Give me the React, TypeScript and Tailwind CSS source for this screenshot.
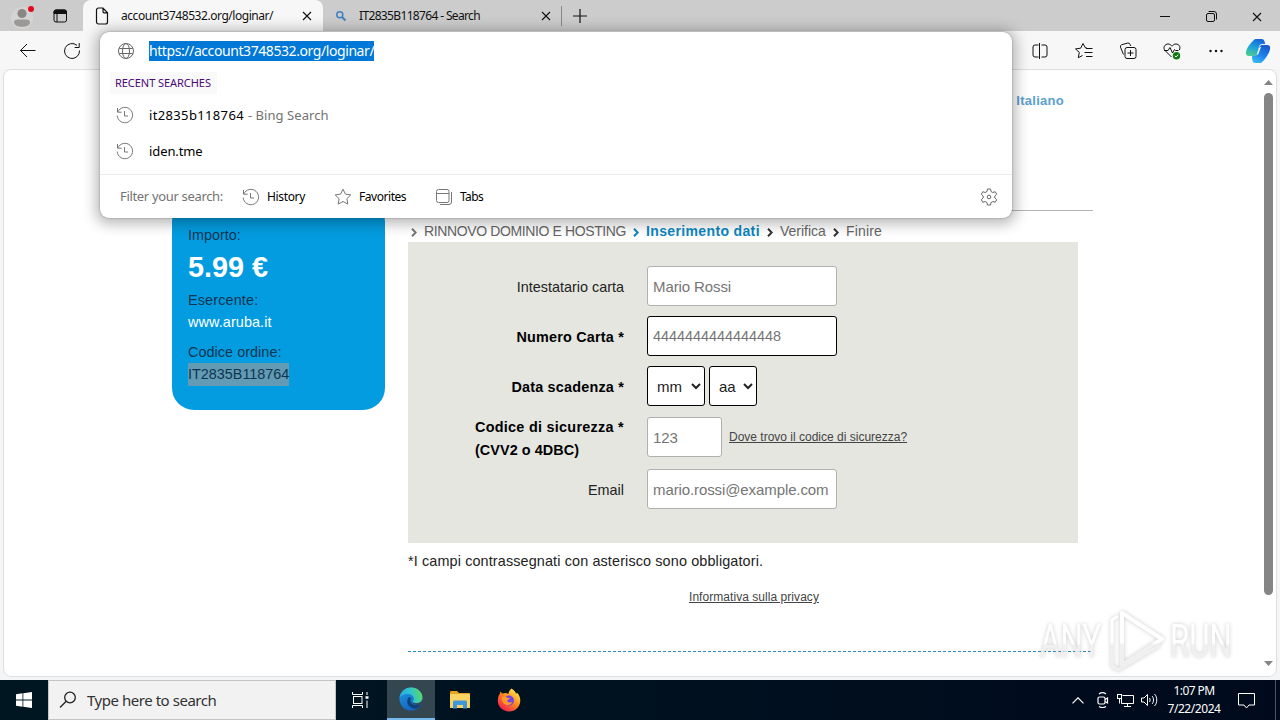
import type { ReactNode } from "react";

type IconProps = { className?: string; children: ReactNode; size?: number };

function Icon({ className = "", children, size = 20 }: IconProps) {
  return (
    <svg
      width={size}
      height={size}
      viewBox="0 0 20 20"
      fill="none"
      stroke="currentColor"
      strokeWidth="1"
      className={`shrink-0 ${className}`}
    >
      {children}
    </svg>
  );
}

function HistoryIcon() {
  return (
    <Icon className="text-[#767676]">
      <path d="M2.5 3v4.2h4.2M2.8 7A7.7 7.7 0 1 1 2.2 10.6" />
      <path d="M9.5 6v5h3.5" />
    </Icon>
  );
}

function StarIcon() {
  return (
    <Icon className="text-[#767676]">
      <path
        strokeLinejoin="round"
        d="M10 2.2l2.4 4.9 5.4.8-3.9 3.8.9 5.4-4.8-2.6-4.8 2.6.9-5.4-3.9-3.8 5.4-.8z"
      />
    </Icon>
  );
}

function CloseIcon({ className = "" }: { className?: string }) {
  return (
    <svg width="10" height="10" viewBox="0 0 10 10" stroke="#111" strokeWidth="1.1" className={`shrink-0 ${className}`}>
      <path d="M1 1l8 8M9 1l-8 8" />
    </svg>
  );
}

function TabBar() {
  return (
    <div className="flex h-[31px] shrink-0 items-center bg-[#cccccc] text-[12px] text-[#111]">
      <svg width="30" height="30" viewBox="0 0 30 30" className="ml-2 shrink-0">
        <circle cx="14" cy="17" r="11" fill="#d6d4d3" />
        <circle cx="14" cy="12.5" r="4.6" fill="#8a8886" />
        <path d="M6 21.5c0-2.400 2-3 4-3h8c2 0 4 .6 4 3 0 2.800-4 4.300-8 4.300s-8-1.500-8-4.300z" fill="#9b9997" />
        <circle cx="23" cy="8" r="3" fill="#e00b1c" />
      </svg>
      <svg width="16" height="16" viewBox="0 0 16 16" className="ml-[14px] shrink-0" fill="none" stroke="#111">
        <rect x="2" y="2" width="12.500" height="12" rx="2" />
        <path d="M2 4a2 2 0 0 1 2-2h8.500a2 2 0 0 1 2 2v1.500H2z" fill="#111" />
        <path d="M5 5v9" />
      </svg>
      <div className="ml-[15px] flex h-full w-[240px] items-center rounded-t-lg bg-[#f7f7f7]">
        <svg width="14" height="18" viewBox="0 0 14 18" fill="none" stroke="#111" strokeWidth="1.200" className="ml-3">
          <path d="M1.500 3a2 2 0 0 1 2-2H8l4.500 4.800V15a2 2 0 0 1-2 2h-7a2 2 0 0 1-2-2zM8 1v3.800a1 1 0 0 0 1 1h3.500" />
        </svg>
        <span className="ml-3 w-[181px] tracking-[-0.45px]">account3748532.org/loginar/</span>
        <CloseIcon />
      </div>
      <svg width="12" height="12" viewBox="0 0 12 12" fill="none" stroke="#3b82c4" className="ml-[12px] shrink-0">
        <circle cx="4.800" cy="4.800" r="3" strokeWidth="1.500" />
        <path d="M7 7l3.500 3.500" strokeWidth="2" />
      </svg>
      <span className="ml-[12px] w-[182px] tracking-[-0.65px]">IT2835B118764 - Search</span>
      <CloseIcon />
      <div className="ml-[10px] h-5 w-px bg-[#888]" />
      <svg width="14" height="14" viewBox="0 0 14 14" stroke="#111" strokeWidth="1.200" className="ml-[11px]">
        <path d="M7 0v14M0 7h14" />
      </svg>
      <div className="ml-auto flex w-[102px] items-center justify-between pt-0.5">
        <svg width="10" height="10" stroke="#111">
          <path d="M0 4.500h10" />
        </svg>
        <svg width="11" height="11" viewBox="0 0 11 11" stroke="#111" fill="none">
          <rect x="0.500" y="2.500" width="8" height="8" rx="1.500" />
          <path d="M2.500 .5h5.500a2.500 2.500 0 0 1 2.500 2.500v5.500" />
        </svg>
        <CloseIcon />
      </div>
      <div className="w-[18px] shrink-0" />
    </div>
  );
}

function Toolbar() {
  return (
    <div className="flex h-[38px] shrink-0 items-center bg-[#f7f7f7] pt-px text-[#111]">
      <Icon className="ml-[18px]">
        <path d="M17.500 9.500H2.500M9 3L2.500 9.500 9 16" />
      </Icon>
      <Icon className="ml-[24px]">
        <path d="M17.500 9.500A7.500 7.500 0 1 1 15 4.400M17.200 2v4.500h-4.500" />
      </Icon>
      <div className="ml-auto flex items-center gap-6">
        <Icon>
          <path d="M8.500 4H5a2 2 0 0 0-2 2v8a2 2 0 0 0 2 2h3.500M11.500 4H15a2 2 0 0 1 2 2v8a2 2 0 0 1-2 2h-3.500M9.500 2v16" />
        </Icon>
        <Icon>
          <path
            strokeLinejoin="round"
            d="M13 7h-1.500L9 2.500 6.700 7.200l-5.200.7 3.800 3.500-1 5.300L8.500 14.500M12 7.500h6.500M10.500 11.500h8M12 15.500h6.500"
          />
        </Icon>
        <Icon>
          <path d="M5.500 13.500L2.500 6.200a2 2 0 0 1 1.200-2.500l6-1.600a2 2 0 0 1 2.400 1.400l.5 1.500" />
          <rect x="7" y="6.500" width="11" height="11" rx="2" />
          <path d="M12.500 9v6M9.500 12h6" />
        </Icon>
        <Icon>
          <path d="M9.500 16L3 9.500C.5 6.500 3 3 6 3c1.800 0 3 1 4 2.200C11 4 12.200 3 14 3c3 0 5 3 3.300 6M2 9.500h4l2-3 2.500 5.500 2-3.500 1 1h3" />
          <circle cx="14.500" cy="14.800" r="3.700" fill="#0f7b0f" stroke="none" />
          <path d="M12.800 14.800l1.200 1.200 2.200-2.300" stroke="#fff" />
        </Icon>
        <Icon>
          <g fill="currentColor" stroke="none">
            <circle cx="4.500" cy="10" r="1.200" />
            <circle cx="10" cy="10" r="1.200" />
            <circle cx="15.500" cy="10" r="1.200" />
          </g>
        </Icon>
      </div>
      <CopilotLogo />
    </div>
  );
}

function CopilotLogo() {
  return (
    <svg width="26" height="26" viewBox="0 0 26 26" className="mr-[9px] ml-[19px] shrink-0">
      <defs>
        <linearGradient id="cpA" x1="0.600" y1="0" x2="0.200" y2="1">
          <stop offset="0" stopColor="#1668d8" />
          <stop offset="0.500" stopColor="#1fa3dd" />
          <stop offset="1" stopColor="#4fd08b" />
        </linearGradient>
        <linearGradient id="cpB" x1="0.800" y1="0" x2="0.300" y2="1">
          <stop offset="0" stopColor="#1a55c8" />
          <stop offset="0.600" stopColor="#1f86ee" />
          <stop offset="1" stopColor="#36b8f2" />
        </linearGradient>
      </defs>
      <path d="M8 3c.8-1.500 2-2 3.500-2h5c2 0 2.700 1.200 3.200 3l.6 2h-3c-2 0-2.800 1-3.300 2.700L12 16c-.5 1.500-1.500 2-3 2H4c-2.500 0-3.700-1.500-3-4.200C2 9.500 5.500 5 8 3z" fill="url(#cpA)" />
      <path d="M18 23c-.8 1.500-2 2-3.500 2h-4c-2 0-2.700-1.200-3.200-3L7 18h2c2 0 2.800-1 3.300-2.700L14.500 9c.5-1.500 1.500-2 3-2H22c2.500 0 3.700 1.500 3 4.200-1 4.300-4.500 9.800-7 11.800z" fill="url(#cpB)" />
      <path d="M14.300 9.500l1.800-.7-2.800 7.500-1.700.7z" fill="#f3fbff" />
    </svg>
  );
}

function Suggestions() {
  return (
    <div className="absolute top-8 left-[100px] flex h-[186px] w-[912px] flex-col rounded-[9px] bg-white text-[13px] shadow-[0_2px_14px_4px_rgba(0,0,0,0.28),0_0_2px_rgba(0,0,0,0.35)]">
      <div className="flex h-[38px] items-center pl-4">
        <Icon className="text-[#666]">
          <circle cx="10" cy="10" r="7.500" />
          <ellipse cx="10" cy="10" rx="3.500" ry="7.500" />
          <path d="M3.300 7.500h13.400M3.300 12.500h13.400" />
        </Icon>
        <span className="ml-[13px] h-5 bg-[#0078d7] text-[14px] leading-5 tracking-[-0.42px] text-white">
          https://account3748532.org/loginar/
        </span>
      </div>
      <div className="mt-[2px] ml-[10px] h-[22px] w-[107px] bg-[#faf9fa] pl-[5px] text-[11px] leading-[22px] tracking-[-0.05px] text-[#4b0a78]">
        RECENT SEARCHES
      </div>
      <div className="mt-[3px] flex h-9 items-center pl-[15px] text-black">
        <HistoryIcon />
        <span className="ml-[14px] pt-px tracking-[0.35px]">it2835b118764</span>
        <span className="ml-1 pt-px tracking-[0.05px] text-[#737373]">- Bing Search</span>
      </div>
      <div className="flex h-9 items-center pl-[15px] text-black">
        <HistoryIcon />
        <span className="ml-[14px] pt-px tracking-[-0.1px]">iden.tme</span>
      </div>
      <div className="mt-[5px] flex flex-1 items-center border-t border-[#ebebeb] pl-5 text-[12px] text-black">
        <span className="w-[121px] text-[13px] tracking-[-0.33px] text-[#737373]">Filter your search:</span>
        <HistoryIcon />
        <span className="ml-[6px] w-[66px] tracking-[-0.35px]">History</span>
        <StarIcon />
        <span className="ml-[6px] w-[75px] tracking-[-0.45px]">Favorites</span>
        <Icon className="text-[#767676]">
          <rect x="2.500" y="2.500" width="12.500" height="13" rx="2" />
          <path d="M2.500 6.500H15M17.500 5v10a2.500 2.500 0 0 1-2.500 2.500H6" />
        </Icon>
        <span className="ml-[6px] tracking-[-0.6px]">Tabs</span>
        <Icon className="mr-[13px] ml-auto text-[#666]">
          <path
            strokeLinejoin="round"
            d="M8.500 2h3l.5 2.500 1.800 1 2.400-.8 1.500 2.600-1.900 1.700v2l1.900 1.700-1.500 2.600-2.400-.8-1.800 1-.5 2.500h-3L8 15.500l-1.800-1-2.400.8-1.500-2.600L4.200 11V9L2.300 7.300l1.500-2.600 2.400.8 1.800-1z"
          />
          <circle cx="10" cy="10" r="1.800" />
        </Icon>
      </div>
    </div>
  );
}

function OrderCard() {
  return (
    <div className="mt-[130px] h-[210px] w-[213px] rounded-[22px] bg-[#049ce0] px-4 pt-[24px] text-[14.4px] leading-[22px] text-[#0d3550]">
      <div>Importo:</div>
      <div className="h-[43px] text-[28.800px] leading-[43px] font-bold text-white">5.99 €</div>
      <div className="tracking-[0.15px]">Esercente:</div>
      <div className="tracking-[0.1px] text-white">www.aruba.it</div>
      <div className="mt-2 tracking-[0.05px]">Codice ordine:</div>
      <span className="inline-block h-[23px] bg-[#639bb5] leading-[23px]">IT2835B118764</span>
    </div>
  );
}

function Chevron({ className }: { className: string }) {
  return (
    <svg width="6" height="9" viewBox="0 0 6 9" fill="none" stroke="currentColor" strokeWidth="2" className={className}>
      <path d="M1 .8l3.700 3.700L1 8.200" />
    </svg>
  );
}

function Breadcrumb() {
  return (
    <div className="flex h-[22px] items-center pl-[3px] text-[14px] text-[#666]">
      <Chevron className="mt-[3px] text-[#777]" />
      <span className="ml-[7px] w-[209px] tracking-[-0.38px]">RINNOVO DOMINIO E HOSTING</span>
      <Chevron className="mt-[3px] text-[#0b86c2]" />
      <span className="ml-[7px] w-[121px] pt-px font-bold tracking-[0.36px] text-[#0b86c2]">Inserimento dati</span>
      <Chevron className="mt-[3px] text-[#333]" />
      <span className="ml-[7px] w-[53px]">Verifica</span>
      <Chevron className="mt-[3px] text-[#333]" />
      <span className="ml-[7px] tracking-[0.15px]">Finire</span>
    </div>
  );
}

const field =
  "h-10 rounded-[3px] border border-[#b0b0b0] bg-white px-[5px] text-[15px] tracking-[-0.1px] placeholder:text-[#757575]";

function FormRow({ label, bold, children }: { label: ReactNode; bold?: boolean; children: ReactNode }) {
  return (
    <div className="flex items-center">
      <div
        className={`flex w-[216px] justify-end pt-[2px] leading-[23px] ${bold ? "font-bold tracking-[0.2px] text-black" : "text-[#222]"}`}
      >
        <div>{label}</div>
      </div>
      <div className="ml-[23px] flex items-center">{children}</div>
    </div>
  );
}

function PaymentForm() {
  return (
    <div className="flex h-[301px] w-[670px] flex-col bg-[#e5e6e0] pt-6 text-[14.4px]">
      <FormRow label="Intestatario carta">
        <input className={`${field} w-[190px]`} placeholder="Mario Rossi" />
      </FormRow>
      <div className="mt-[10px]">
        <FormRow bold label="Numero Carta *">
          <input
            className="h-10 w-[190px] rounded-[3px] border border-black bg-white px-[5px] text-[14.400px] placeholder:text-[#757575]"
            placeholder="4444444444444448"
          />
        </FormRow>
      </div>
      <div className="mt-[10px]">
        <FormRow bold label="Data scadenza *">
          <select className="h-10 w-[58px] rounded-[3px] border border-black bg-white pl-[5px] text-[15px] text-[#222]">
            <option>mm</option>
          </select>
          <select className="ml-1 h-10 w-12 rounded-[3px] border border-black bg-white pl-[5px] text-[15px] text-[#222]">
            <option>aa</option>
          </select>
        </FormRow>
      </div>
      <div className="mt-[6px]">
        <FormRow
          bold
          label={
            <div className="pt-[2px]">
              <div className="tracking-[0.28px]">Codice di sicurezza *</div>
              <div className="tracking-[0.08px]">(CVV2 o 4DBC)</div>
            </div>
          }
        >
          <input className={`${field} w-[75px]`} placeholder="123" />
          <a className="ml-[7px] text-[12px] text-[#444] underline">Dove trovo il codice di sicurezza?</a>
        </FormRow>
      </div>
      <div className="mt-[7px]">
        <FormRow label="Email">
          <input className={`${field} w-[190px]`} placeholder="mario.rossi@example.com" />
        </FormRow>
      </div>
    </div>
  );
}

const watermarkText = "inline-block origin-left bg-linear-to-b from-white from-55% to-[#ececec] to-60% bg-clip-text text-transparent";

function Watermark() {
  return (
    <div className="absolute top-[604px] left-[1040px] flex h-[74px] items-center font-['Roboto'] text-[46px] leading-none opacity-75 drop-shadow-[0_0_2px_rgba(0,0,0,0.28)]">
      <span className="w-[65px]">
        <span className={`${watermarkText} scale-x-[0.680]`}>ANY</span>
      </span>
      <svg width="62" height="66" viewBox="0 0 62 66" fill="none" strokeLinejoin="round">
        <defs>
          <linearGradient id="wm" gradientUnits="userSpaceOnUse" x1="0" y1="0" x2="0" y2="66">
            <stop offset="0.520" stopColor="#fff" />
            <stop offset="0.560" stopColor="#ececec" />
          </linearGradient>
        </defs>
        <g stroke="url(#wm)">
          <path d="M17 5v52l40-26z" strokeWidth="4" />
          <path d="M7 58V12l6-4" strokeWidth="3" />
          <path d="M7 58l6 4 42-25" strokeWidth="3" />
        </g>
      </svg>
      <span className="ml-[3px] w-[64px]">
        <span className={`${watermarkText} scale-x-[0.680]`}>RUN</span>
      </span>
    </div>
  );
}

function Page() {
  return (
    <div className="flex min-h-0 flex-1 bg-[#f4f5f6] px-[3px] pb-[3px]">
      <div className="flex flex-1 overflow-hidden rounded-lg border border-[#dedede] bg-white font-['Liberation_Sans',Arial,sans-serif]">
        <div className="flex flex-1 pl-[168px]">
          <OrderCard />
          <div className="ml-[23px] w-[685px]">
            <div className="h-[141px] border-b border-[#b5b5b5] pt-[21px] pr-[29px] text-right text-[13px] font-bold tracking-[0.28px] text-[#5a9fd0]">
              Italiano
            </div>
            <div className="h-[9px]" />
            <Breadcrumb />
            <PaymentForm />
            <p className="mt-2 text-[14.4px] leading-5 tracking-[0.13px] text-[#222]">
              *I campi contrassegnati con asterisco sono obbligatori.
            </p>
            <p className="mt-[17px] pl-[281px] text-[12px] leading-[18px] tracking-[0.05px] text-[#444]">
              <a className="underline">Informativa sulla privacy</a>
            </p>
            <div className="mt-[45px] h-px bg-[repeating-linear-gradient(90deg,#2b8cbc_0_3px,transparent_3px_5px)]" />
          </div>
        </div>
        <div className="flex w-[15px] flex-col items-center pt-[10px] text-[#858585]">
          <svg width="9" height="5" className="shrink-0" fill="currentColor">
            <path d="M0 5L4.500 0 9 5z" />
          </svg>
          <div className="mt-2 h-[502px] w-[9px] shrink-0 rounded-full bg-[#858585]" />
          <svg width="9" height="5" className="mt-[66px] shrink-0" fill="currentColor">
            <path d="M0 0l4.500 5L9 0z" />
          </svg>
        </div>
      </div>
    </div>
  );
}

function EdgeLogo() {
  return (
    <svg width="24" height="24" viewBox="0 0 24 24">
      <defs>
        <linearGradient id="edA" x1="0" y1="0.500" x2="1" y2="0.300">
          <stop offset="0" stopColor="#2aa9e0" />
          <stop offset="0.500" stopColor="#2fc3cf" />
          <stop offset="1" stopColor="#5fd95c" />
        </linearGradient>
        <linearGradient id="edB" x1="0" y1="0" x2="0.500" y2="1">
          <stop offset="0" stopColor="#1b9de2" />
          <stop offset="1" stopColor="#1464c0" />
        </linearGradient>
      </defs>
      <circle cx="12" cy="12" r="11.500" fill="url(#edB)" />
      <path d="M.6 11C1.200 5 6 .5 12 .5c7 0 11.500 5 11.500 10 0 3.500-2.600 5.700-5.700 5.700-2.400 0-4-.9-4-1.800 0-.6 1-1 1-2.900C14.800 9 12 7 8.500 7 4.500 7 1.500 9 .6 11z" fill="url(#edA)" />
      <path d="M9 11c-2.500 6 1.500 10.500 8 10.800 2-.9 4-2.700 5-4.800-4 2-9 1.500-10.500-2.500-.5-1.500 0-2.500.5-3.500-1-.6-2-.6-3 0z" fill="#123f78" />
      <path d="M24 15.500l-1.800 1.500c-3 1.500-6 1.300-8-.5l-.4-2.100c0 .9 1.600 1.800 4 1.800 3.100 0 5.200-1.600 5.700-4.200z" fill="#344750" />
    </svg>
  );
}

function FolderLogo() {
  return (
    <svg width="22" height="20" viewBox="0 0 22 20">
      <path d="M1 2.500C1 1.500 1.500 1 2.500 1H8l2 2h10c.8 0 1 .5 1 1v3H1z" fill="#e5a320" />
      <rect x="1" y="4" width="20" height="14" rx="0.500" fill="#fbd264" />
      <path d="M4 18.500V12a1.500 1.500 0 0 1 1.500-1.500h11A1.500 1.500 0 0 1 18 12v6.500h-4V15H8v3.500z" fill="#3f97d6" />
    </svg>
  );
}

function FirefoxLogo() {
  return (
    <svg width="24" height="24" viewBox="0 0 24 24">
      <defs>
        <linearGradient id="ffA" x1="0.800" y1="0.100" x2="0.200" y2="0.900">
          <stop offset="0" stopColor="#ffe24a" />
          <stop offset="0.450" stopColor="#ff8a1f" />
          <stop offset="1" stopColor="#f5234f" />
        </linearGradient>
      </defs>
      <path d="M14.500.5c2.500 1.500 4 3.300 4.500 5.200l1-1C22 6.500 23.300 9.500 23.300 12.500 23.300 18.700 18.300 23.500 12 23.500S.8 18.700.8 12.800C.8 10 1.500 7.500 3 5.500l.3-2 2 2 3-.5c1.200 0 2.200.4 3 1C11.700 4 12.700 2 14.500.5z" fill="url(#ffA)" />
      <circle cx="12" cy="12.500" r="5" fill="#7542e5" />
      <path d="M5 9c2-1 4-.6 5 .7l3 .3c-.5 1.500-2.500 1.700-3 2.800.5 2 3.500 2.200 5.500 1-1 3-4.500 4-7 2.700C5.500 15 4.500 12 5 9z" fill="#ff9a25" />
    </svg>
  );
}

function Taskbar() {
  return (
    <div className="flex h-10 shrink-0 items-center bg-linear-to-r from-[#001722] to-[#000a1c] text-white">
      <div className="flex w-12 justify-center">
        <svg width="16" height="16" viewBox="0 0 16 16" fill="#fff">
          <path d="M0 2.200l6.500-.9v6.300H0zM7.300 1.200L16 0v7.600H7.300zM0 8.400h6.500v6.300L0 13.800zM7.300 8.400H16V16l-8.700-1.200z" />
        </svg>
      </div>
      <div className="flex h-full w-[288px] items-center border border-[#c4c4c4] bg-[#f2f2f2] text-[15px] text-[#333]">
        <svg width="18" height="18" viewBox="0 0 18 18" fill="none" stroke="#222" strokeWidth="1.300" className="ml-[10px]">
          <circle cx="11" cy="6.500" r="5.300" />
          <path d="M7.200 10.300L1 16.500" />
        </svg>
        <span className="ml-[10px] pt-px tracking-[-0.46px]">Type here to search</span>
      </div>
      <div className="flex w-[51px] justify-center pr-[3px]">
        <svg width="17" height="16" viewBox="0 0 17 16" fill="none" stroke="#fff">
          <path d="M.5 0v2.500h10V0M.5 16v-2.500h10V16M15 0v3M15 8.500V16" />
          <rect x="1.500" y="4.500" width="8.500" height="7" />
          <path d="M13.500 5.500h3" strokeWidth="2.500" />
        </svg>
      </div>
      <div className="flex h-full w-12 items-center justify-center border-b-2 border-[#76b9ed] bg-[#344750]">
        <EdgeLogo />
      </div>
      <div className="flex w-[49px] justify-center">
        <FolderLogo />
      </div>
      <div className="flex w-[49px] justify-center">
        <FirefoxLogo />
      </div>
      <div className="ml-auto flex items-center">
        <svg width="12" height="7" viewBox="0 0 12 7" fill="none" stroke="#fff" strokeWidth="1.200">
          <path d="M.5 6.300L6 .8l5.500 5.500" />
        </svg>
        <svg width="12" height="16" viewBox="0 0 12 16" fill="none" stroke="#fff" strokeWidth="1.200" className="ml-[13px]">
          <rect x="1" y="5" width="7" height="7" rx="1.500" />
          <path d="M8 7.500l2.500-1.500v5L8 9.500M2 2c2-1.500 5-1.500 7 0M2 14.500c2 1.300 5 1.300 7 0" />
        </svg>
        <svg width="17" height="15" viewBox="0 0 17 15" fill="none" stroke="#fff" className="ml-2">
          <path d="M5.500 2.500h11v8H4.500V6M7 13.500h7M10.500 10.500v3M2.500 6v4.500" />
          <rect x="0.500" y="1.500" width="4" height="4" />
        </svg>
        <svg width="17" height="14" viewBox="0 0 17 14" fill="none" stroke="#fff" className="ml-[7px]">
          <path d="M.5 5h2.500L6.500 1.500v11L3 9H.5zM8.500 5c.8 1 .8 3 0 4M11 3c2 2 2 6 0 8M13.500 1c3 3 3 9 0 12" />
        </svg>
        <div className="ml-2 w-[56px] text-center text-[12px] leading-[18px] tracking-[-0.6px]">
          <div>1:07 PM</div>
          <div className="tracking-[-0.45px]">7/22/2024</div>
        </div>
        <svg width="17" height="17" viewBox="0 0 17 17" fill="none" stroke="#fff" className="mr-[20px] ml-4">
          <path d="M.5 1.500h16v11.500H11l-2.500 3-2.500-3H.5z" />
        </svg>
        <div className="h-10 w-px bg-[#4a5560]" />
        <div className="w-[4px]" />
      </div>
    </div>
  );
}

export default function App() {
  return (
    <div className="relative flex h-[720px] w-[1280px] flex-col overflow-hidden bg-white font-['Noto_Sans','Open_Sans',sans-serif] whitespace-nowrap">
      <TabBar />
      <Toolbar />
      <Page />
      <Taskbar />
      <Suggestions />
      <Watermark />
    </div>
  );
}
